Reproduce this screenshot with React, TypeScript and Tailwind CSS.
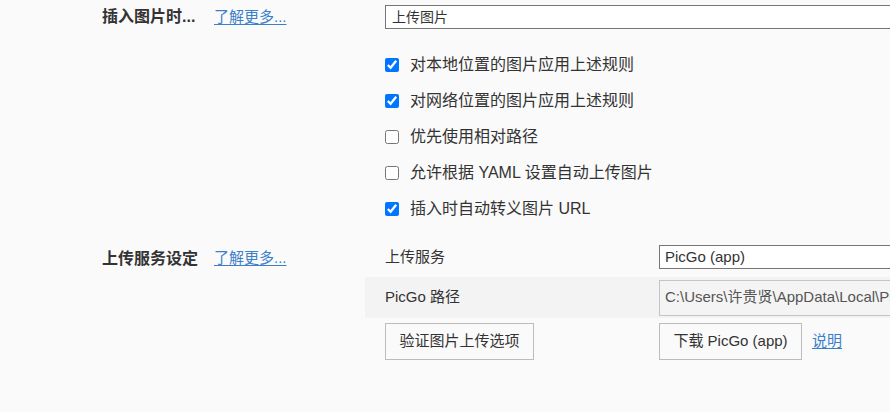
import React from "react";

const font = "font-['Liberation_Sans','Noto_Sans_CJK_SC',sans-serif]";

const imageRules = [
  { label: "对本地位置的图片应用上述规则", checked: true },
  { label: "对网络位置的图片应用上述规则", checked: true },
  { label: "优先使用相对路径", checked: false },
  { label: "允许根据 YAML 设置自动上传图片", checked: false },
  { label: "插入时自动转义图片 URL", checked: true },
];

const LearnMore = () => (
  <a className="text-[15px] text-[#3b7fcb] underline underline-offset-2 cursor-pointer">
    了解更多...
  </a>
);

export default function App() {
  return (
    <div className={`${font} w-[890px] h-[412px] overflow-hidden bg-[#fafafa] text-[#333]`}>
      {/* insert image section */}
      <div className="flex pt-[5px]">
        <div className="w-[385px] shrink-0 pl-[102px] flex items-center gap-[16px] h-6">
          <span className="w-[96px] text-[16px] font-bold whitespace-nowrap">插入图片时...</span>
          <LearnMore />
        </div>
        <div className="flex-1">
          <div className="h-6 w-[520px] border border-[#767676] bg-white flex items-center px-[6px] text-[14px] text-[#333]">
            上传图片
          </div>
          <div className="flex flex-col pt-[25px] gap-[15px]">
            {imageRules.map((r, i) => (
              <label key={i} className="flex items-center h-[21px] gap-[11px] text-[16px] text-[#333]">
                <input
                  type="checkbox"
                  defaultChecked={r.checked}
                  className="w-[14px] h-[14px] m-0 accent-[#0075ff]"
                />
                <span>{r.label}</span>
              </label>
            ))}
          </div>
        </div>
      </div>

      {/* upload service section */}
      <div className="flex mt-[26px]">
        <div className="w-[385px] shrink-0 pl-[102px] flex items-start gap-[16px] pt-[2px]">
          <span className="w-[96px] text-[16px] font-bold whitespace-nowrap">上传服务设定</span>
          <LearnMore />
        </div>
        <div className="flex-1 flex flex-col">
          <div className="flex items-center h-6">
            <span className="w-[274px] text-[15px]">上传服务</span>
            <div className="h-6 w-[240px] border border-[#767676] bg-white flex items-center px-[5px] text-[15px]">
              PicGo (app)
            </div>
          </div>
          <div className="flex items-center h-[41px] mt-2 -ml-[20px] pl-[20px] bg-[#f3f3f3]">
            <span className="w-[274px] text-[15px]">PicGo 路径</span>
            <div className="h-9 w-[240px] border border-[#c4c4c4] bg-[#f4f4f4] flex items-center px-[5px] text-[15px] text-[#555] whitespace-nowrap overflow-hidden">
              C:\Users\许贵贤\AppData\Local\Programs\PicGo
            </div>
          </div>
          <div className="flex items-center mt-[5px]">
            <div className="w-[274px]">
              <button className="h-[37px] w-[149px] border border-[#bcbcbc] bg-[#fafafa] text-[15px] text-[#333]">
                验证图片上传选项
              </button>
            </div>
            <button className="h-[37px] w-[143px] border border-[#bcbcbc] bg-[#fafafa] text-[15px] text-[#333]">
              下载 PicGo (app)
            </button>
            <a className="ml-[10px] text-[15px] text-[#3b7fcb] underline underline-offset-2">说明</a>
          </div>
        </div>
      </div>
    </div>
  );
}
